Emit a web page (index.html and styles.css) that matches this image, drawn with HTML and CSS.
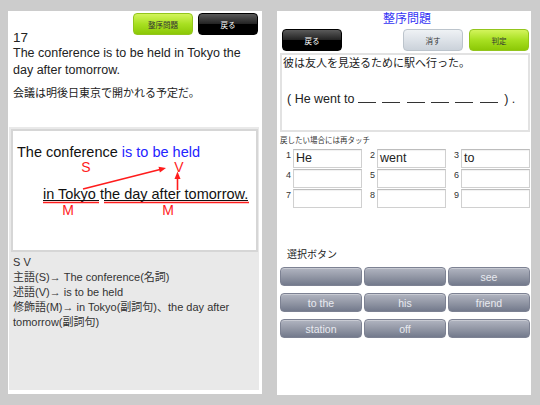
FILE: index.html
```html
<!DOCTYPE html>
<html lang="ja">
<head>
    <meta charset="UTF-8">
    <title>整序問題</title>
    <link rel="stylesheet" href="styles.css">
</head>
<body>
<div class="panel panel-left">
    <div class="lesson-head">
        <div class="top-bar">
            <button class="btn btn-green">整序問題</button>
            <button class="btn btn-black">戻る</button>
        </div>
        <div class="q-num">17</div>
        <p class="q-en">The conference is to be held in Tokyo the day after tomorrow.</p>
        <p class="q-ja">会議は明後日東京で開かれる予定だ。</p>
    </div>
    <div class="explain">
        <div class="diagram">
            <svg class="diagram-svg" viewBox="13 131 243 119" width="243" height="119">
                <text class="dg-text" x="17" y="157">The conference <tspan class="dg-blue">is to be held</tspan></text>
                <text class="dg-red" x="86" y="172" text-anchor="middle">S</text>
                <text class="dg-red" x="179" y="172" text-anchor="middle">V</text>
                <line class="dg-arrow" x1="83" y1="189" x2="160" y2="169.5"/>
                <polygon class="dg-head" points="166,168 159.9,172.6 158.5,166.8"/>
                <line class="dg-arrow" x1="177.5" y1="190" x2="177.5" y2="178"/>
                <polygon class="dg-head" points="177.5,171.5 174.5,179 180.5,179"/>
                <text class="dg-text" x="43" y="199">in Tokyo the day after tomorrow.</text>
                <line class="dg-ul" x1="43" y1="200.5" x2="99" y2="200.5"/>
                <line class="dg-ul" x1="104" y1="200.5" x2="248" y2="200.5"/>
                <line class="dg-mark" x1="43" y1="202.5" x2="99" y2="202.5"/>
                <line class="dg-mark" x1="104" y1="202.5" x2="249" y2="202.5"/>
                <text class="dg-red" x="68" y="215" text-anchor="middle">M</text>
                <text class="dg-red" x="168" y="215" text-anchor="middle">M</text>
            </svg>
        </div>
        <div class="notes">
            <p>S V</p>
            <p>主語(S)→ The conference(名詞)</p>
            <p>述語(V)→ is to be held</p>
            <p>修飾語(M)→ in Tokyo(副詞句)、the day after tomorrow(副詞句)</p>
        </div>
    </div>
</div>

<div class="panel panel-right">
    <div class="title">整序問題</div>
    <div class="tool-row">
        <button class="btn btn-black">戻る</button>
        <span class="spacer"></span>
        <button class="btn btn-gray">消す</button>
        <button class="btn btn-green">判定</button>
    </div>
    <div class="q-box">
        <p class="q-box-ja">彼は友人を見送るために駅へ行った。</p>
        <p class="q-box-en">( He went to <span class="blank"></span><span class="blank"></span><span class="blank"></span><span class="blank"></span><span class="blank"></span><span class="blank"></span>) .</p>
    </div>
    <div class="hint">戻したい場合には再タッチ</div>
    <div class="answers">
        <div class="cell"><span class="num">1</span><span class="slot">He</span></div>
        <div class="cell"><span class="num">2</span><span class="slot">went</span></div>
        <div class="cell"><span class="num">3</span><span class="slot">to</span></div>
        <div class="cell"><span class="num">4</span><span class="slot"></span></div>
        <div class="cell"><span class="num">5</span><span class="slot"></span></div>
        <div class="cell"><span class="num">6</span><span class="slot"></span></div>
        <div class="cell"><span class="num">7</span><span class="slot"></span></div>
        <div class="cell"><span class="num">8</span><span class="slot"></span></div>
        <div class="cell"><span class="num">9</span><span class="slot"></span></div>
    </div>
    <div class="choice-label">選択ボタン</div>
    <div class="choices">
        <button class="choice"></button>
        <button class="choice"></button>
        <button class="choice">see</button>
        <button class="choice">to the</button>
        <button class="choice">his</button>
        <button class="choice">friend</button>
        <button class="choice">station</button>
        <button class="choice">off</button>
        <button class="choice"></button>
    </div>
</div>
</body>
</html>
```

FILE: styles.css
```css
/* Page */
body {
    margin: 0;
    padding: 11px 0 0 8px;
    background-color: #cccccc;
    display: flex;
    gap: 15px;
    font-family: "Liberation Sans", "Noto Sans CJK JP", sans-serif;
    color: #222;
}

p {
    margin: 0;
}

.panel {
    width: 254px;
    background-color: #ffffff;
    display: flex;
    flex-direction: column;
}

.panel-left {
    height: 383px;
}

.panel-right {
    height: 384px;
}

/* Buttons */
.btn {
    width: 60px;
    height: 22px;
    padding: 0;
    border-radius: 4px;
    font-family: inherit;
    font-size: 7.5px;
}

.btn-green {
    background: linear-gradient(#d3f45c, #a8e021 50%, #8cc806);
    border: 1px solid #93c51d;
    color: #333;
}

.btn-black {
    background: linear-gradient(#5a5a5a, #222 50%, #000 52%, #000);
    border: 1px solid #000;
    color: #fff;
}

.btn-gray {
    background: linear-gradient(#eff2f5, #dde2e8 50%, #cbd2da);
    border: 1px solid #bcc4cc;
    color: #333;
}

/* Left panel: question */
.lesson-head {
    height: 116px;
    padding: 0 3px 0 5px;
    box-sizing: border-box;
}

.top-bar {
    display: flex;
    justify-content: flex-end;
    gap: 5px;
    padding: 2px 1px 0 0;
}

.q-num {
    margin-top: -4px;
    font-size: 13.5px;
    line-height: 14px;
}

.q-en {
    font-size: 12.5px;
    line-height: 17px;
}

.q-ja {
    margin-top: 6px;
    font-size: 11px;
    line-height: 17px;
}

/* Left panel: explanation */
.explain {
    flex: 1;
    margin: 0 3px 4px 1px;
    padding: 2px 1px 0 2px;
    background-color: #e9e9e9;
}

.diagram {
    height: 123px;
    box-sizing: border-box;
    border: 2px solid #d6d6d6;
    background-color: #ffffff;
}

.diagram-svg {
    display: block;
}

.dg-text {
    font: 14.5px "Liberation Sans", sans-serif;
    fill: #111;
}

.dg-blue {
    fill: #2424ff;
}

.dg-red {
    font: 14px "Liberation Sans", sans-serif;
    fill: #ff1c1c;
}

.dg-arrow,
.dg-mark {
    stroke: #ff1c1c;
    stroke-width: 1.6;
}

.dg-head {
    fill: #ff1c1c;
}

.dg-ul {
    stroke: #111;
    stroke-width: 1;
}

.notes {
    margin-top: 3px;
    padding-left: 2px;
    font-size: 11px;
    line-height: 15px;
    color: #333;
}

/* Right panel */
.title {
    text-align: center;
    font-size: 12px;
    line-height: 16px;
    color: #3434f4;
    padding-left: 6px;
}

.tool-row {
    display: flex;
    gap: 6px;
    margin-top: 2px;
    padding: 0 2px 0 5px;
}

.spacer {
    flex: 1;
}

.q-box {
    height: 79px;
    box-sizing: border-box;
    margin: 2px 1px 0 3px;
    padding: 0 0 0 1px;
    border: 2px solid #e2e2e2;
}

.q-box-ja {
    font-size: 11px;
    line-height: 17px;
}

.q-box-en {
    margin-top: 19px;
    padding-left: 4px;
    font-size: 12.5px;
    line-height: 17px;
}

.blank {
    display: inline-block;
    width: 18px;
    height: 11px;
    margin-right: 6.4px;
    border-bottom: 1px solid #333;
}

.hint {
    margin-top: 4px;
    padding-left: 3px;
    font-size: 7.5px;
    line-height: 10px;
    color: #333;
}

.answers {
    display: grid;
    grid-template-columns: repeat(3, 84px);
    row-gap: 1px;
    margin-top: 3px;
    padding-left: 1px;
}

.cell {
    display: flex;
}

.num {
    width: 15px;
    box-sizing: border-box;
    padding: 1px 2px 0 0;
    text-align: right;
    font-size: 9px;
    line-height: 10px;
    color: #333;
}

.slot {
    width: 69px;
    height: 19px;
    box-sizing: border-box;
    padding-left: 2px;
    border: 1px solid #d0d0d0;
    border-top-color: #bdbdbd;
    box-shadow: inset 0 1px 1px rgba(0, 0, 0, 0.06);
    font-size: 12.5px;
    line-height: 17px;
}

.choice-label {
    margin-top: 40px;
    padding-left: 10px;
    font-size: 10px;
    line-height: 14px;
    color: #222;
}

.choices {
    display: grid;
    grid-template-columns: repeat(3, 82px);
    column-gap: 2px;
    row-gap: 7px;
    margin-top: 5px;
    padding-left: 3px;
}

.choice {
    height: 19px;
    padding: 0;
    border: 1px solid #7d8293;
    border-radius: 4px;
    background: linear-gradient(#b1b5c1, #9398a6 50%, #737a8c);
    box-shadow: inset 0 1px 0 rgba(255, 255, 255, 0.3);
    font-family: inherit;
    font-size: 10.5px;
    color: #e8eaf0;
}
```
